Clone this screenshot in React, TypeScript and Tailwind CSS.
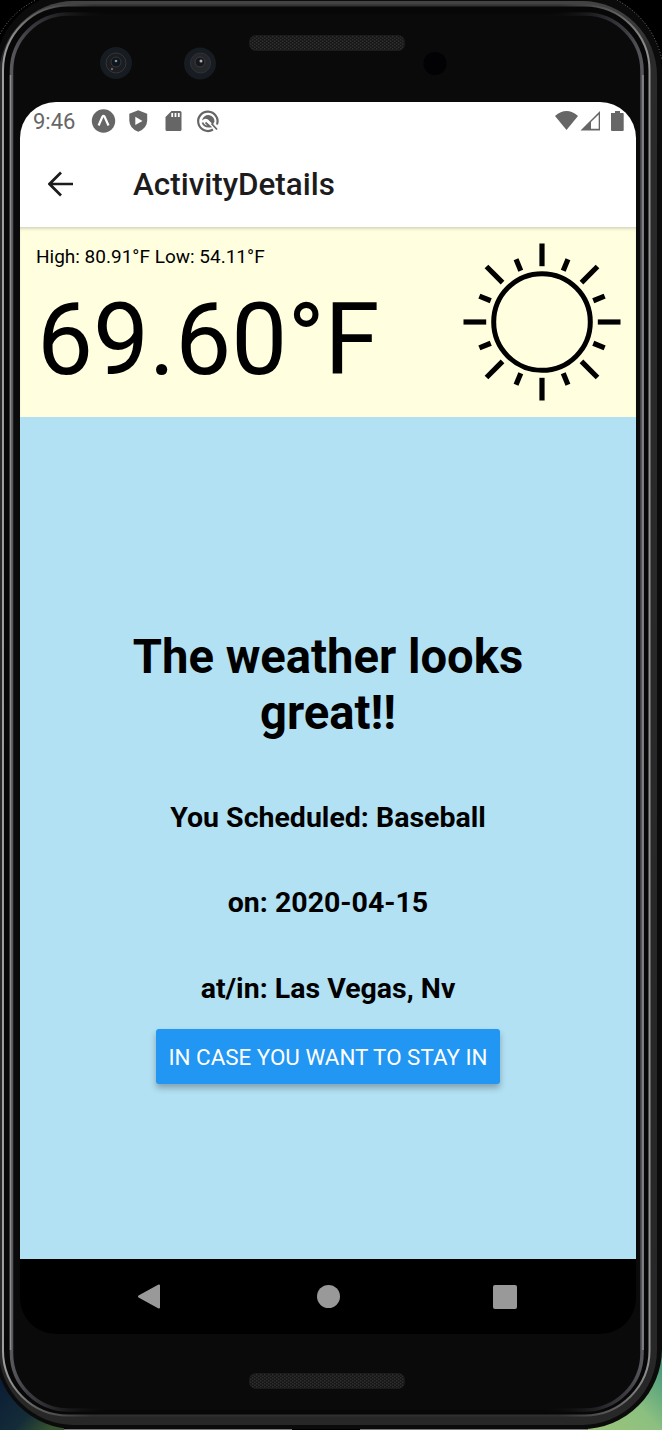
import React from "react";

function Bezel() {
  return (
    <svg className="absolute inset-0" width="662" height="1430" viewBox="0 0 662 1430" fill="none">
      <defs>
        <linearGradient id="inner" x1="9" x2="645" y1="0" y2="0" gradientUnits="userSpaceOnUse">
          <stop offset="0" stopColor="#5c5c60" />
          <stop offset=".03" stopColor="#3c3c42" />
          <stop offset=".07" stopColor="#26262a" />
          <stop offset=".16" stopColor="#0a0a0a" stopOpacity="0" />
          <stop offset=".84" stopColor="#0a0a0a" stopOpacity="0" />
          <stop offset=".93" stopColor="#26262a" />
          <stop offset=".97" stopColor="#3c3c42" />
          <stop offset="1" stopColor="#5c5c60" />
        </linearGradient>
        <linearGradient id="outer" x1="2" x2="650" y1="0" y2="0" gradientUnits="userSpaceOnUse">
          <stop offset="0" stopColor="#a0a0a0" />
          <stop offset=".05" stopColor="#606060" />
          <stop offset=".14" stopColor="#303030" />
          <stop offset=".86" stopColor="#303030" />
          <stop offset=".95" stopColor="#606060" />
          <stop offset="1" stopColor="#929292" />
        </linearGradient>
        <linearGradient id="body" x1="0" x2="0" y1="0" y2="1430" gradientUnits="userSpaceOnUse">
          <stop offset="0" stopColor="#444" />
          <stop offset=".04" stopColor="#2a2a2a" />
          <stop offset="1" stopColor="#272727" />
        </linearGradient>
        <linearGradient id="grass" x1="600" x2="662" y1="1430" y2="1370" gradientUnits="userSpaceOnUse">
          <stop offset="0" stopColor="#9ac47a" />
          <stop offset=".5" stopColor="#8cc080" />
          <stop offset="1" stopColor="#4c9c7c" />
        </linearGradient>
        <linearGradient id="night" x1="0" x2="50" y1="1385" y2="1430" gradientUnits="userSpaceOnUse">
          <stop offset="0" stopColor="#0c1e36" />
          <stop offset=".6" stopColor="#142c38" />
          <stop offset="1" stopColor="#38542f" />
        </linearGradient>
        <pattern id="mesh" width="4" height="3" patternUnits="userSpaceOnUse">
          <rect width="4" height="3" fill="#161616" />
          <rect width="1.5" height="1.5" fill="#303030" />
          <rect x="2" y="1.5" width="1.5" height="1.5" fill="#303030" />
        </pattern>
      </defs>
      <rect width="662" height="1430" fill="#000" />
      <rect y="1370" width="64" height="60" fill="url(#night)" />
      <rect x="588" y="1350" width="74" height="80" fill="url(#grass)" />
      <path d="M64 1429.5H292M360 1429.5H588" stroke="#777" />
      <rect x="-5" y="-8" width="667" height="1437" rx="80" fill="#0b0b0b" />
      <path d="M0 34Q12 12 36 0M617 0Q653 20 662 60" stroke="#777" strokeDasharray="1 2" />
      <rect x="-1" y="1" width="658" height="1424" rx="75" fill="url(#body)" />
      <rect x="3" y="5.5" width="646.5" height="1410" rx="65" fill="#070707" stroke="url(#outer)" strokeWidth="2" />
      <rect x="11.5" y="14" width="630.5" height="1396" rx="57" fill="#0a0a0a" stroke="url(#inner)" strokeWidth="3.5" />
      <path d="M10.500 75V1350M643 75V1350" stroke="#8c8c90" strokeWidth="1.500" />
      <rect x="249.500" y="35.500" width="155" height="15" rx="6" fill="url(#mesh)" stroke="#1b1b1b" />
      <rect x="249.500" y="1373.500" width="155" height="15" rx="6" fill="url(#mesh)" stroke="#1b1b1b" />
      <g>
        <circle cx="116" cy="63" r="16" fill="#161c21" />
        <circle cx="116" cy="63" r="10" fill="#1b1d20" stroke="#343638" />
        <circle cx="116" cy="62" r="5" fill="#10151b" stroke="#32383e" />
        <circle cx="116" cy="61" r="1.3" fill="#7890a8" />
        <circle cx="112" cy="69" r="1.2" fill="#77605a" />
        <circle cx="200" cy="63.500" r="16" fill="#161c21" />
        <circle cx="200.500" cy="63" r="10" fill="#24262a" stroke="#303236" />
        <circle cx="200" cy="62" r="5" fill="#15171b" stroke="#393c40" />
        <circle cx="201" cy="61" r="1.5" fill="#a8b0c0" />
        <circle cx="435" cy="63.500" r="11.500" fill="#020204" />
      </g>
    </svg>
  );
}

function StatusBar() {
  return (
    <div className="flex h-[38px] items-center bg-white pl-[13px] pr-[12px] text-[#666]">
      <span className="mt-px w-[53px] shrink-0 text-[22px] leading-none">9:46</span>
      <svg className="-ml-px" width="140" height="34" viewBox="0 0 140 34" fill="none">
        <g transform="translate(1 0)">
          <circle cx="17.500" cy="17" r="11.700" fill="#666" />
          <path d="M12.600 21.500 16.500 12.500Q17.500 11 18.500 12.500L22.500 21.500" stroke="#fff" strokeWidth="2.200" />
          <path d="M52.200 6.300 61.200 9.700V16.500Q61 24.500 52.200 27.800 43.500 24.500 43.300 16.500V9.700Z" fill="#666" />
          <path d="M49.300 12.800V21L56.500 16.900Z" fill="#fff" />
          <path d="M85.500 7H94Q95.500 7 95.500 8.500V25.500Q95.500 27 94 27H81Q79.500 27 79.500 25.500V13Z" fill="#666" />
          <path d="M86.200 9V13M89.500 9V13M92.800 9V13" stroke="#fff" strokeWidth="1.800" />
          <path d="M127 25.500A9.700 9.700 0 1 1 131 20.500" stroke="#666" strokeWidth="2.200" />
          <path d="M116 16.500Q117.500 11 122.500 11Q128.500 12 128.500 17.500L127 20.500L122 15.500Q119 13.500 116 16.500Z" fill="#666" />
          <path d="M116.500 18.500Q118 23 124 22.500L119.500 18.500M125.500 19.500 131 25.500" stroke="#666" strokeWidth="1.800" />
        </g>
      </svg>
      <svg className="ml-auto" width="70" height="22" viewBox="0 0 70 22">
        <path d="M1 6Q12.500-4 24 6L12.500 20Z" fill="#666" />
        <path d="M26.500 20.500H46V1Z" fill="#666" />
        <path d="M37 18.700V12L44.700 4.500V18.700Z" fill="#fff" />
        <path d="M57 3H61V1H66V3H69Q69.700 3 69.700 4V20Q69.700 21 69 21H58Q57 21 57 20Z" fill="#666" />
      </svg>
    </div>
  );
}

function Sun() {
  const quarters = [0, 90, 180, 270];
  return (
    <svg width="158" height="158" viewBox="-79 -79 158 158" fill="none" stroke="#000">
      <circle r="48.300" strokeWidth="5" />
      {quarters.map((a) => (
        <g key={a} transform={`rotate(${a})`} strokeWidth="5.200">
          <path d="M0-55.800V-78.500" />
          <path d="M0-55.800V-78.500" transform="rotate(45)" />
          <path d="M0-55.500V-67.800" transform="rotate(22.500)" />
          <path d="M0-55.500V-67.800" transform="rotate(67.500)" />
        </g>
      ))}
    </svg>
  );
}

function NavBar() {
  return (
    <div className="grid h-[75px] grid-cols-[257px_102px_252px] items-center bg-black">
      <svg className="justify-self-center" width="24" height="28" viewBox="0 0 24 28">
        <path d="M2 13.500 22 2.500V24.500Z" fill="#999" stroke="#999" strokeWidth="2" strokeLinejoin="round" />
      </svg>
      <span className="size-[23px] justify-self-center rounded-full bg-[#999]" />
      <span className="size-[24px] justify-self-center rounded-[2px] bg-[#999]" />
    </div>
  );
}

export default function App() {
  return (
    <div className="relative h-[1430px] w-[662px] overflow-hidden bg-black pl-[20px] pt-[102px] font-['Roboto',sans-serif] text-black">
      <Bezel />
      <main className="relative flex h-[1232px] w-[616px] flex-col overflow-hidden rounded-[36px]">
        <StatusBar />
        <header className="flex h-[87px] items-center bg-white pl-[28px]">
          <svg width="26" height="26" viewBox="0 0 26 26" fill="none" stroke="#1c1c1e" strokeWidth="2.700">
            <path d="M25 13H2M13 1.500 1.500 13 13 24.500" />
          </svg>
          <h1 className="ml-[59px] mt-[2px] text-[31.400px] font-medium leading-none text-[#1c1c1e]">ActivityDetails</h1>
        </header>
        <section className="flex h-[190px] justify-between bg-[#ffffe0] pl-[16px] pr-[15px] pt-[16px] shadow-[inset_0_3px_3px_-1px_rgba(0,0,0,0.16)]">
          <div>
            <p className="mt-[3px] text-[19px] leading-[22px]">High: 80.91°F Low: 54.11°F</p>
            <p className="ml-px mt-[14px] text-[99.700px] leading-[117px]">69.60°F</p>
          </div>
          <Sun />
        </section>
        <section className="flex flex-1 flex-col items-center bg-[#b2e1f3] pt-[212px] text-center font-bold">
          <h2 className="w-[420px] text-[47.200px] leading-[56px]">The weather looks great!!</h2>
          <p className="mt-[60px] text-[28.500px] leading-[34px]">You Scheduled: Baseball</p>
          <p className="mt-[51px] text-[28.500px] leading-[34px]">on: 2020-04-15</p>
          <p className="mt-[52px] text-[28.500px] leading-[34px]">at/in: Las Vegas, Nv</p>
          <button className="mt-[23px] h-[55px] w-[344px] whitespace-nowrap rounded-[3px] bg-[#2196f3] pt-[2px] text-[22.400px] font-normal text-white shadow-[0_4px_6px_rgba(0,0,0,0.28)]">
            IN CASE YOU WANT TO STAY IN
          </button>
        </section>
        <NavBar />
      </main>
    </div>
  );
}
